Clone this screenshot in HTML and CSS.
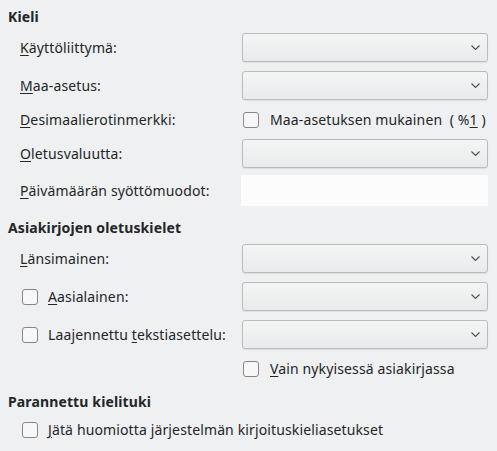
FILE: index.html
```html
<!DOCTYPE html>
<html lang="fi">
<head>
    <meta charset="UTF-8">
    <title>Kieliasetukset</title>
    <link rel="stylesheet" href="styles.css">
</head>
<body>

    <!-- Kieli -->
    <div class="section">
        <h3 class="heading">Kieli</h3>

        <div class="row first">
            <label class="label"><u>K</u>äyttöliittymä:</label>
            <div class="combo"><svg class="arrow" width="9" height="5" viewBox="0 0 9 5"><path d="M0.5 0.5 L4.5 4.5 L8.5 0.5"/></svg></div>
        </div>

        <div class="row">
            <label class="label"><u>M</u>aa-asetus:</label>
            <div class="combo"><svg class="arrow" width="9" height="5" viewBox="0 0 9 5"><path d="M0.5 0.5 L4.5 4.5 L8.5 0.5"/></svg></div>
        </div>

        <div class="row short">
            <label class="label"><u>D</u>esimaalierotinmerkki:</label>
            <div class="check-wrap">
                <span class="check"></span>
                <span>Maa-asetuksen mukainen &nbsp;( %<u>1</u> )</span>
            </div>
        </div>

        <div class="row">
            <label class="label"><u>O</u>letusvaluutta:</label>
            <div class="combo"><svg class="arrow" width="9" height="5" viewBox="0 0 9 5"><path d="M0.5 0.5 L4.5 4.5 L8.5 0.5"/></svg></div>
        </div>

        <div class="row tall">
            <label class="label"><u>P</u>äivämäärän syöttömuodot:</label>
            <div class="text-input"></div>
        </div>
    </div>

    <!-- Asiakirjojen oletuskielet -->
    <div class="section second">
        <h3 class="heading">Asiakirjojen oletuskielet</h3>

        <div class="row first">
            <label class="label"><u>L</u>änsimainen:</label>
            <div class="combo"><svg class="arrow" width="9" height="5" viewBox="0 0 9 5"><path d="M0.5 0.5 L4.5 4.5 L8.5 0.5"/></svg></div>
        </div>

        <div class="row">
            <label class="label with-check"><span class="check"></span><span><u>A</u>asialainen:</span></label>
            <div class="combo"><svg class="arrow" width="9" height="5" viewBox="0 0 9 5"><path d="M0.5 0.5 L4.5 4.5 L8.5 0.5"/></svg></div>
        </div>

        <div class="row">
            <label class="label with-check"><span class="check"></span><span>Laajennettu <u>t</u>ekstiasettelu:</span></label>
            <div class="combo"><svg class="arrow" width="9" height="5" viewBox="0 0 9 5"><path d="M0.5 0.5 L4.5 4.5 L8.5 0.5"/></svg></div>
        </div>

        <div class="row short">
            <div class="label"></div>
            <div class="check-wrap">
                <span class="check"></span>
                <span><u>V</u>ain nykyisessä asiakirjassa</span>
            </div>
        </div>
    </div>

    <!-- Parannettu kielituki -->
    <div class="section third">
        <h3 class="heading">Parannettu kielituki</h3>

        <div class="row short single">
            <label class="label with-check wide"><span class="check"></span><span><u>J</u>ätä huomiotta järjestelmän kirjoituskieliasetukset</span></label>
        </div>
    </div>

</body>
</html>
```

FILE: styles.css
```css
body {
    margin: 0;
    padding: 8px 9px 0 8px;
    background-color: #eff0f1;
    color: #232629;
    font-family: "Noto Sans", "Open Sans", sans-serif;
    font-size: 14px;
    line-height: 18px;
    letter-spacing: 0.13px;
}

u {
    text-decoration: underline;
    text-underline-offset: 2px;
}

.heading {
    margin: 0;
    font-size: 14px;
    font-weight: bold;
    line-height: 18px;
}

.section.second {
    margin-top: 13px;
}

.section.third {
    margin-top: 14px;
}

.row {
    display: flex;
    align-items: center;
    height: 29px;
    margin-top: 9px;
    padding-left: 12px;
}

.row.first {
    margin-top: 7px;
}

.row.short {
    height: 21px;
}

.row.tall {
    height: 31px;
    margin-top: 7px;
}

.row.single {
    margin-top: 8px;
}

.label {
    width: 222px;
    flex-shrink: 0;
}

.label.with-check {
    display: flex;
    align-items: center;
    gap: 10px;
    padding-left: 2px;
    box-sizing: border-box;
}

.label.wide {
    width: auto;
}

.combo {
    width: 246px;
    height: 29px;
    box-sizing: border-box;
    border: 1px solid #b9bbbd;
    border-radius: 3px;
    background: linear-gradient(#f4f5f5, #e9eaeb);
    box-shadow: 0 1px 1px rgba(0, 0, 0, 0.08);
    display: flex;
    align-items: center;
    justify-content: flex-end;
    padding-right: 7px;
}

.arrow path {
    fill: none;
    stroke: #4d4f51;
    stroke-width: 1.1;
}

.text-input {
    width: 248px;
    height: 31px;
    margin-left: -1px;
    background-color: #fcfcfc;
}

.check-wrap {
    display: flex;
    align-items: center;
    gap: 11px;
    padding-left: 1px;
}

.check {
    display: inline-block;
    width: 16px;
    height: 16px;
    box-sizing: border-box;
    border: 1px solid #85878a;
    border-radius: 3px;
    background-color: #f7f7f7;
    flex-shrink: 0;
}
```
